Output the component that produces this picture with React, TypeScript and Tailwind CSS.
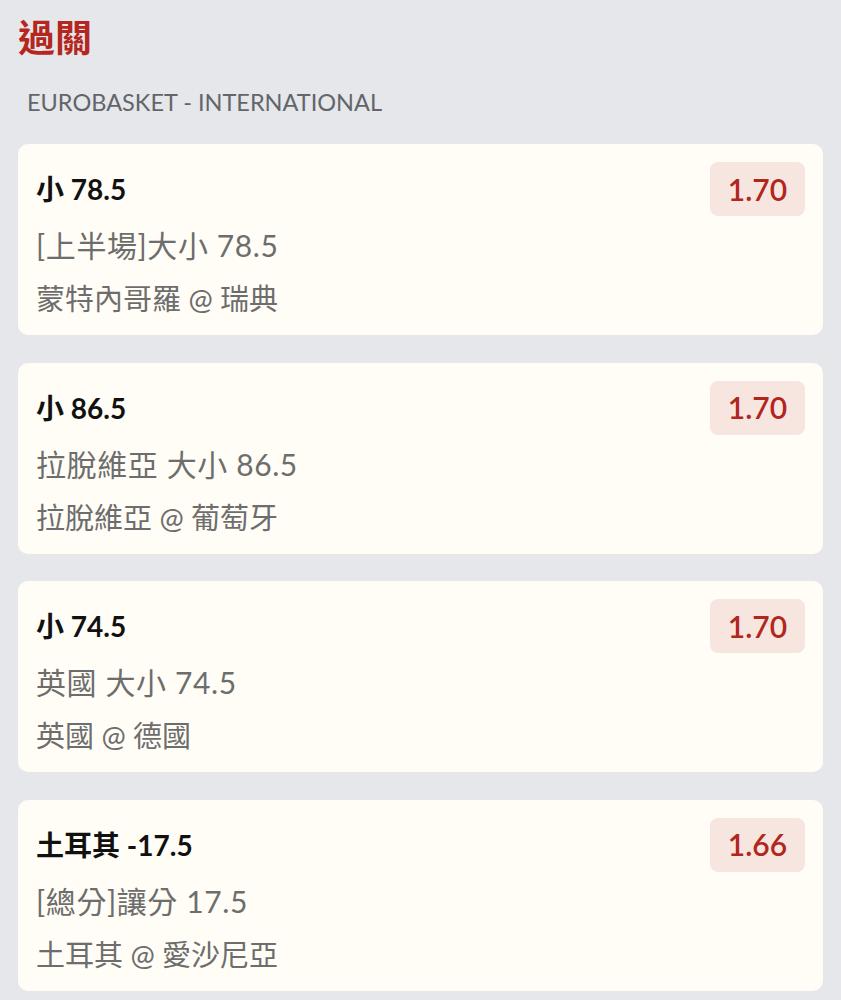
const bets = [
  { pick: '小 78.5', market: '[上半場]大小 78.5', match: '蒙特內哥羅 @ 瑞典', odds: '1.70' },
  { pick: '小 86.5', market: '拉脫維亞 大小 86.5', match: '拉脫維亞 @ 葡萄牙', odds: '1.70' },
  { pick: '小 74.5', market: '英國 大小 74.5', match: '英國 @ 德國', odds: '1.70' },
  { pick: '土耳其 -17.5', market: '[總分]讓分 17.5', match: '土耳其 @ 愛沙尼亞', odds: '1.66' },
]

const BetCard = ({ pick, market, match, odds }: (typeof bets)[number]) => (
  <div className="rounded-[10px] bg-[#fffdf6] px-[18px] pt-[18px] pb-[10px]">
    <div className="flex items-center justify-between">
      <span className="text-[28px] font-bold text-[#111]">{pick}</span>
      <span className="flex h-[54px] w-[95px] items-center justify-center rounded-[8px] bg-[#f7e6df] text-[30px] font-semibold text-[#b1261d]">
        {odds}
      </span>
    </div>
    <div className="mt-[3px] text-[30px] leading-[53px] tracking-[0.6px] text-[#6d6d6d]">{market}</div>
    <div className="text-[29px] leading-[53px] text-[#6d6d6d]">{match}</div>
  </div>
)

export default function App() {
  return (
    <div className="min-h-screen bg-[#e6e7ea] px-[18px] pt-[16px] pb-[10px] font-['Lato','Noto_Sans_CJK_TC',sans-serif]">
      <h1 className="text-[37px] leading-[44px] font-bold text-[#b5261e]">過關</h1>
      <div className="mt-[28px] pl-[9px] text-[23.5px] leading-[28px] text-[#62656a]">
        EUROBASKET - INTERNATIONAL
      </div>
      <div className="mt-[28px] flex flex-col gap-[27.5px]">
        {bets.map((b) => (
          <BetCard key={b.pick} {...b} />
        ))}
      </div>
    </div>
  )
}
